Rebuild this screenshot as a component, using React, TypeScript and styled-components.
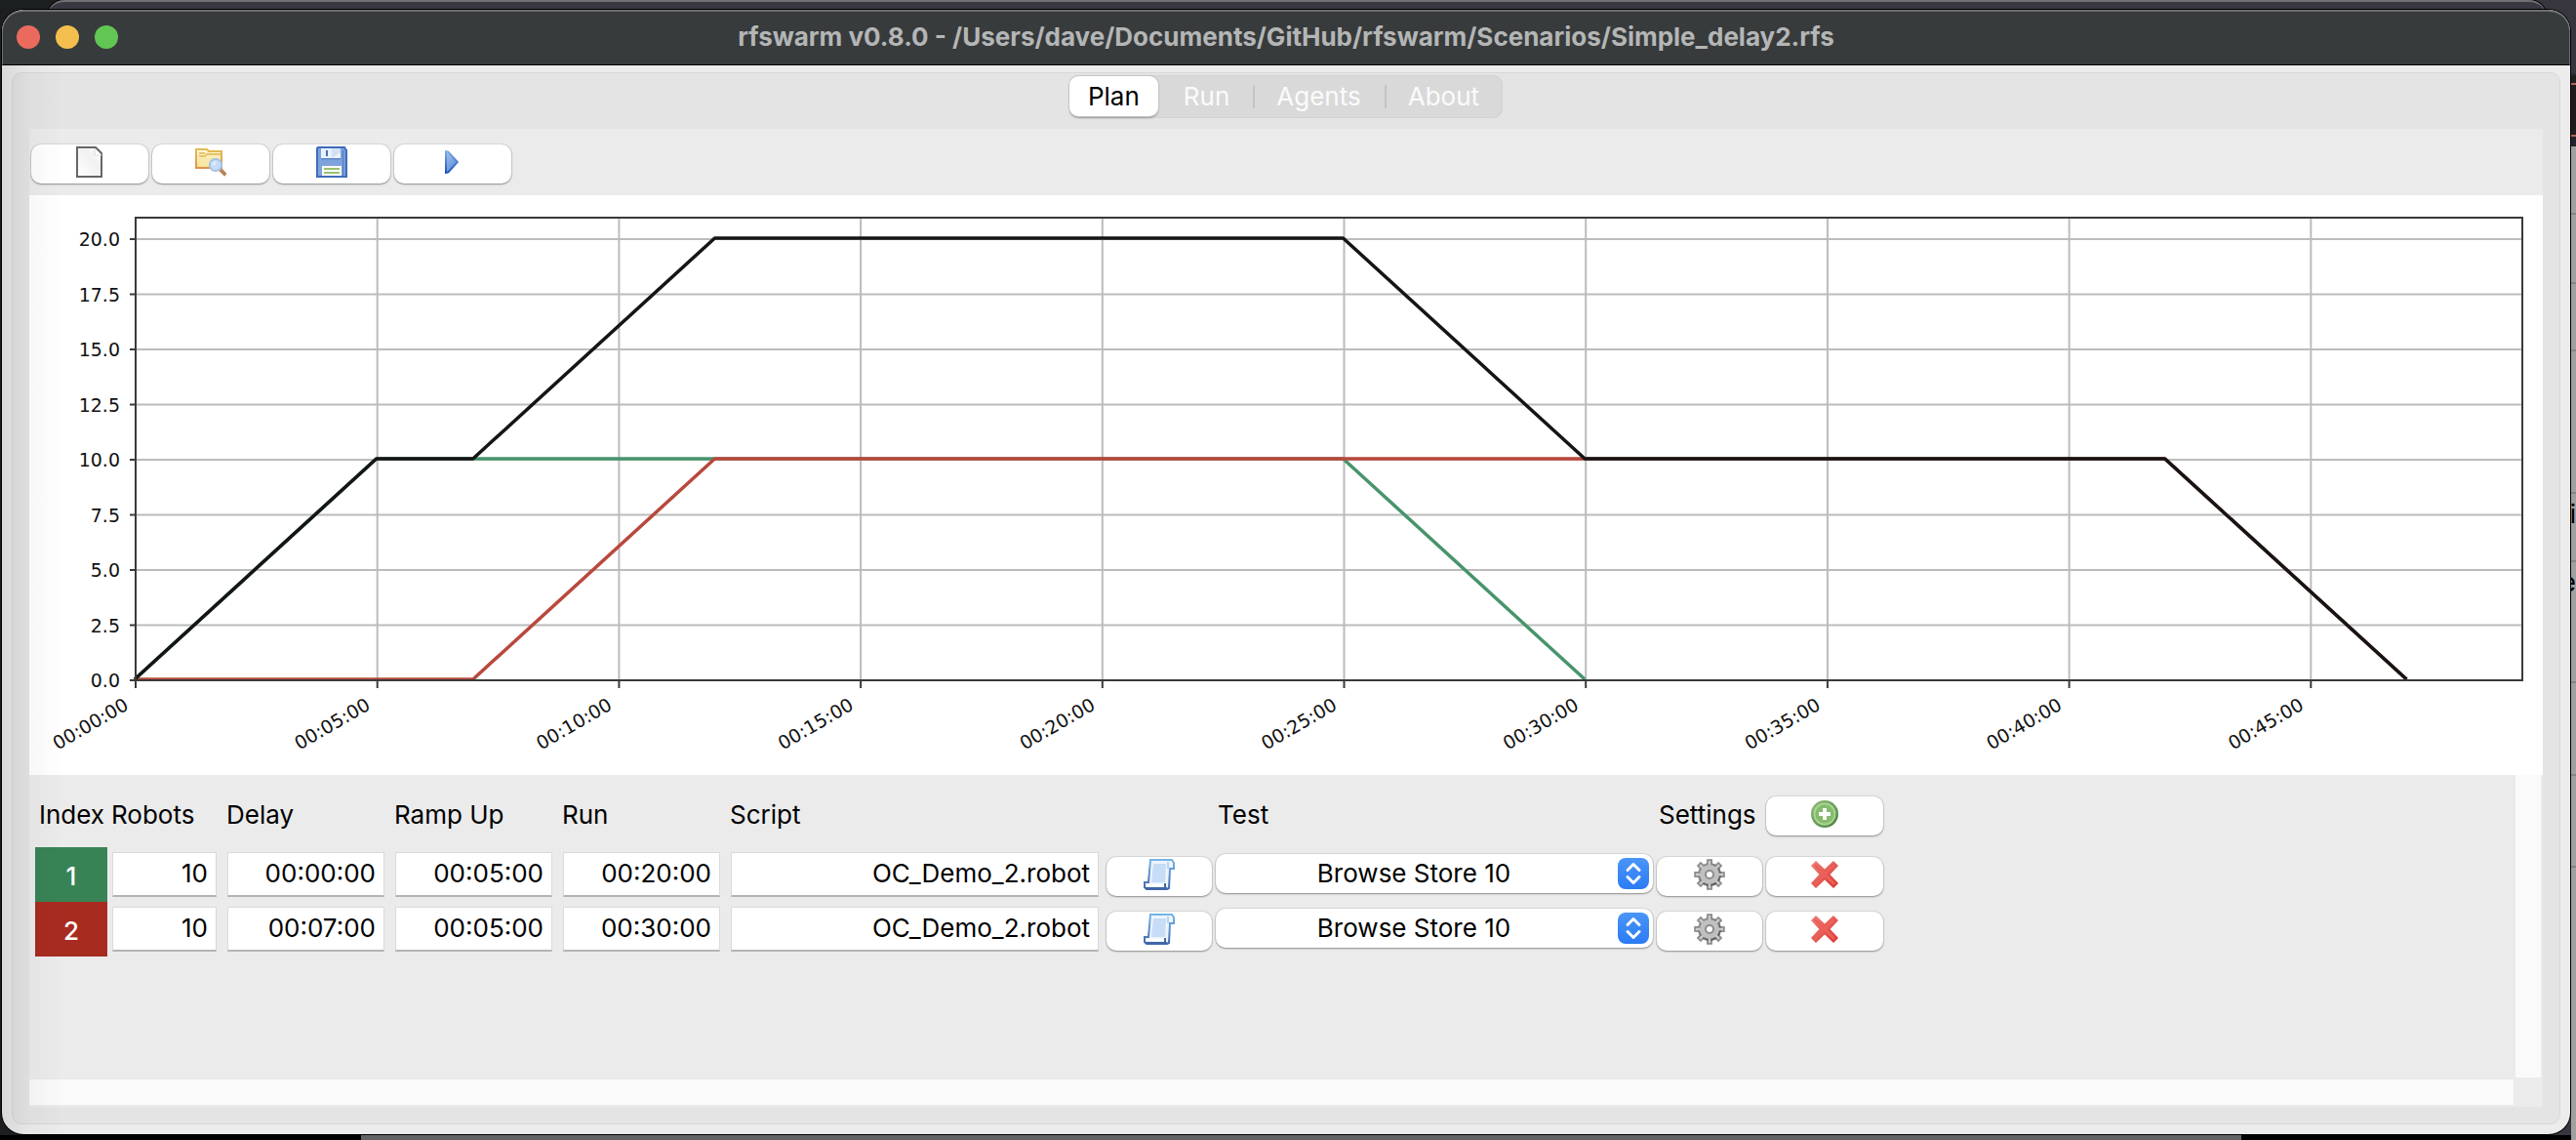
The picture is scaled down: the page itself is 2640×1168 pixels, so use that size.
import React from "react";
import styled, { createGlobalStyle, css } from "styled-components";

const UI_FONT = 'Inter, "Liberation Sans", Arial, sans-serif';

const GlobalStyle = createGlobalStyle`
  *, *::before, *::after { box-sizing: border-box; }
  body { margin: 0; background: #050507; font-family: ${UI_FONT}; }
  button, input, select { font: inherit; color: inherit; margin: 0; }
`;

/* ---------- desktop behind the window ---------- */

const Desktop = styled.div`
  position: relative;
  display: flex;
  min-height: 100vh;
  padding: 10px 6px 6px 2px;
  overflow: hidden;
  background:
    linear-gradient(to right, #000 0 14%, #636363 14% 87%, #000 87%) bottom / 100% 5px no-repeat,
    linear-gradient(to right, #1c1f20 0 50%, #37363f 50%);
`;

const RearWindow = styled.div`
  position: absolute;
  top: 0;
  left: 48px;
  right: 30px;
  height: 40px;
  border-top: 2px solid #717176;
  border-radius: 18px;
  background: #393842;
  box-shadow: 0 0 0 1px #000;
`;

const EdgeStrip = styled.div`
  position: absolute;
  top: 76px;
  right: 0;
  bottom: 0;
  width: 5px;
  overflow: hidden;
  border-top: 2px solid #24242c;
  background: linear-gradient(#221e1e 0 7px, #b2645b 7px 9px, #201c1c 9px 60px, #b2645b 60px 62px, #23232d 62px 72px, #a0a09f 72px);
`;

const EdgeText = styled.span<{ $top: number }>`
  position: absolute;
  right: 0;
  top: ${(p) => p.$top}px;
  font-size: 26px;
  line-height: 30px;
  color: #000;
`;

const EdgeRule = styled.span<{ $top: number }>`
  position: absolute;
  left: 0;
  right: 0;
  top: ${(p) => p.$top}px;
  height: 2px;
  background: #858585;
`;

/* ---------- window ---------- */

const Window = styled.main`
  position: relative;
  display: flex;
  flex: 1;
  flex-direction: column;
  min-width: 0;
  overflow: hidden;
  border-radius: 22px;
  background: #ececec;
  box-shadow: 0 0 0 1px #000;
`;

const TitleBar = styled.header`
  display: grid;
  grid-template-columns: 1fr auto 1fr;
  align-items: center;
  height: 57px;
  padding: 0 14px 2px;
  border: 1px solid #6b6e6f;
  border-top-width: 2px;
  border-bottom: 1px solid #000;
  border-radius: 22px 22px 0 0;
  background: #383b3c;
`;

const Lights = styled.div`
  display: flex;
  gap: 16px;
`;

const Light = styled.button<{ $color: string }>`
  width: 24px;
  height: 24px;
  padding: 0;
  border: 0;
  border-radius: 50%;
  background: ${(p) => p.$color};
`;

const Title = styled.h1`
  margin: 0;
  font-size: 26px;
  line-height: 32px;
  font-weight: 700;
  color: #b4b6b6;
  white-space: nowrap;
`;

const Body = styled.div`
  position: relative;
  display: flex;
  flex: 1;
  flex-direction: column;
  padding: 7px 10px 10px;

  &::after {
    content: "";
    position: absolute;
    inset: 0 auto 0 0;
    width: 64px;
    background: linear-gradient(to right, rgba(0, 0, 0, 0.08), rgba(0, 0, 0, 0.03) 40%, transparent);
    pointer-events: none;
  }
`;

const Notebook = styled.div`
  display: flex;
  flex: 1;
  flex-direction: column;
  padding: 2px 17px 17px;
  border: 1px solid #d8d8d8;
  border-radius: 10px;
  background: #e4e4e4;
`;

const TabList = styled.div`
  display: flex;
  align-self: center;
  height: 44px;
  margin-bottom: 11px;
  border-radius: 10px;
  background: #d9d9d9;
  box-shadow: inset 0 0 0 1px #d2d2d2;
`;

const Tab = styled.button<{ $selected?: boolean; $divided?: boolean }>`
  position: relative;
  padding: 0 24px;
  border: 0;
  font-size: 26px;
  line-height: 32px;
  background: transparent;
  color: #fbfbfb;

  ${(p) =>
    p.$selected &&
    css`
      margin: 1px 2px 2px 0;
      padding: 0 19px;
      border-radius: 9px;
      background: #fff;
      color: #000;
      box-shadow: 0 0 0 1px #c4c4c4, 0 2px 2px rgba(0, 0, 0, 0.3);
    `}

  ${(p) =>
    p.$divided &&
    css`
      &::before {
        content: "";
        position: absolute;
        left: 0;
        top: 10px;
        bottom: 10px;
        width: 2px;
        background: #c4c4c4;
      }
    `}
`;

const Page = styled.section`
  display: flex;
  flex: 1;
  flex-direction: column;
  background: #ebebeb;
`;

const Toolbar = styled.div`
  display: flex;
  gap: 4px;
  padding: 16px 2px 12px;
`;

const PushButton = styled.button<{ $width: number }>`
  display: flex;
  align-items: center;
  justify-content: center;
  width: ${(p) => p.$width}px;
  height: 40px;
  padding: 0 0 4px;
  border: 0;
  border-radius: 10px;
  background: #fff;
  box-shadow: 0 0 0 1px rgba(0, 0, 0, 0.07), 0 1px 2px rgba(0, 0, 0, 0.35);

  svg { width: 32px; height: 32px; }
`;

const ChartPane = styled.div`
  background: #fff;

  svg { display: block; width: 100%; height: auto; }
`;

/* ---------- scenario table ---------- */

const Scroller = styled.div`
  display: grid;
  flex: 1;
  grid-template-columns: 1fr 26px;
  grid-template-rows: 1fr 26px;
  gap: 2px;
  padding: 0 2px 2px 0;
`;

const Track = styled.div`
  background: #fafafa;
`;

const Viewport = styled.div`
  padding-left: 6px;
`;

const Table = styled.table`
  table-layout: fixed;
  width: 1896px;
  border-collapse: collapse;
  font-size: 26px;
  line-height: 32px;
  color: #000;
`;

const Col = styled.col<{ $width: number }>`
  width: ${(p) => p.$width}px;
`;

const HeadCell = styled.th`
  height: 74px;
  padding: 8px 0 0 4px;
  font-weight: 400;
  text-align: left;
  white-space: nowrap;
`;

const HeadButtonCell = styled.td`
  padding: 10px 2px 0;
`;

const IndexCell = styled.th<{ $color: string }>`
  height: 56px;
  padding: 4px 0 0;
  font-weight: 500;
  text-align: center;
  color: #fff;
  background: ${(p) => p.$color};
`;

const FieldCell = styled.td`
  padding: 0 6px 0 5px;
`;

const ButtonCell = styled.td`
  padding: 4px 2px 0;
`;

const SelectCell = styled.td`
  padding: 0 2px 2px;
`;

const Entry = styled.input`
  display: block;
  width: 100%;
  height: 46px;
  padding: 0 8px 2px;
  border: 1px solid #dadada;
  border-bottom: 2px solid #b4b4b4;
  border-radius: 0;
  background: #fff;
  text-align: right;
  outline: 0;
`;

const SelectBox = styled.div`
  position: relative;
`;

const Select = styled.select`
  display: block;
  appearance: none;
  width: 100%;
  height: 40px;
  padding: 0 42px 0 0;
  border: 0;
  border-radius: 10px;
  background: #fff;
  text-align: center;
  text-align-last: center;
  box-shadow: 0 0 0 1px rgba(0, 0, 0, 0.07), 0 1px 2px rgba(0, 0, 0, 0.35);
`;

const Stepper = styled.span`
  position: absolute;
  top: 4px;
  right: 4px;
  width: 32px;
  height: 32px;
  border-radius: 8px;
  background: linear-gradient(#4a95f8, #2b7bf5);
  pointer-events: none;

  svg { display: block; }
`;

/* ---------- icons, drawn on a 16 unit grid ---------- */

const NewIcon = () => (
  <svg viewBox="0 0 16 16" aria-hidden="true">
    <defs>
      <linearGradient id="paper" x1="0" y1="1" x2="1" y2="0">
        <stop offset="0" stopColor="#fff" />
        <stop offset="0.6" stopColor="#f1f1f1" />
        <stop offset="1" stopColor="#fff" />
      </linearGradient>
    </defs>
    <path d="M1.500.5h9.500l3 3v12H1.500z" fill="url(#paper)" stroke="#666" />
    <path d="M10.500 1v3.500H14" fill="#fff" stroke="#ddd" strokeWidth=".6" />
    <path d="M11 .5l3 3" stroke="#777" />
  </svg>
);

const OpenIcon = () => (
  <svg viewBox="0 0 16 16" aria-hidden="true">
    <defs>
      <linearGradient id="folder" x1="0" y1="0" x2="0" y2="1">
        <stop offset="0" stopColor="#fdf6da" />
        <stop offset="1" stopColor="#f6e08c" />
      </linearGradient>
      <linearGradient id="folderEdge" x1="0" y1="0" x2="0" y2="1">
        <stop offset="0" stopColor="#e3bd55" />
        <stop offset="1" stopColor="#dc9550" />
      </linearGradient>
    </defs>
    <path d="M.5 1.500h5.500l1 1h6.500v8.500H.5z" fill="url(#folder)" stroke="url(#folderEdge)" />
    <path d="M2 5h3l1-1h7M2 3.500h3" fill="none" stroke="#e8c468" strokeWidth=".9" />
    <path d="M2 6h10v4H2z" fill="#f8e8a6" opacity=".7" />
    <path d="M12.700 11.700l3 3" stroke="#b98456" strokeWidth="1.900" />
    <circle cx="10.500" cy="9.500" r="3.100" fill="#c5dcf6" stroke="#a3c0e6" strokeWidth=".9" />
    <circle cx="9.800" cy="8.800" r="1.100" fill="#dceafa" />
  </svg>
);

const SaveIcon = () => (
  <svg viewBox="0 0 16 16" aria-hidden="true">
    <path d="M.5 1L1 .5h13.500l1 1.500v13.500H.5z" fill="#7ea2dc" stroke="#3f6cba" />
    <path d="M2.500 1h10v5h-10z" fill="#eaf1fb" />
    <path d="M8 1h4.500v2L8 6z" fill="#d3e0f4" />
    <path d="M5 2h1v3H5z" fill="#4773bf" />
    <path d="M2.500 6h10v.8h-10z" fill="#5f88cc" />
    <path d="M13.800 2v13" stroke="#5a84ca" strokeWidth=".8" />
    <path d="M3 10h10v5H3z" fill="#fbfdf8" />
    <path d="M4 11h8v1H4zM4 13h8v1H4z" fill="#98c172" />
  </svg>
);

const PlayIcon = () => (
  <svg viewBox="0 0 16 16" aria-hidden="true">
    <defs>
      <linearGradient id="play" x1="0" y1="0" x2=".6" y2="1">
        <stop offset="0" stopColor="#a5c4ee" />
        <stop offset="1" stopColor="#5e8dd9" />
      </linearGradient>
      <linearGradient id="playEdge" x1="0" y1="0" x2="0" y2="1">
        <stop offset="0" stopColor="#82a9e4" />
        <stop offset="1" stopColor="#1f52c0" />
      </linearGradient>
    </defs>
    <path d="M4.500 2.600v10.900l1.200-.3 4.700-5.200-4.700-5.200z" fill="url(#play)" stroke="url(#playEdge)" />
  </svg>
);

const ScriptIcon = () => (
  <svg viewBox="0 0 16 16" aria-hidden="true">
    <defs>
      <linearGradient id="scrollEdge" x1="0" y1="0" x2="0" y2="1">
        <stop offset="0" stopColor="#74b5e6" />
        <stop offset="1" stopColor="#4269ac" />
      </linearGradient>
    </defs>
    <path d="M3.500.5h11l1 1.500v3h-2l-.5 10-1 .5h-10.500l-1-1v-2.500h2z" fill="#eef4fd" stroke="url(#scrollEdge)" />
    <path d="M5 2.500h6.500L11 12H4z" fill="#c6dcf7" />
    <path d="M12.500 1.500v3.500" stroke="#a5cdf0" strokeWidth=".8" />
    <path d="M1.500 13.500h9" stroke="#fff" />
    <path d="M1 15h11M11 12.500v2" stroke="#3f67a8" strokeWidth="1" />
  </svg>
);

const teeth = [0, 45, 90, 135, 180, 225, 270, 315];

const GearIcon = () => (
  <svg viewBox="0 0 16 16" aria-hidden="true">
    <defs>
      <linearGradient id="gear" gradientUnits="userSpaceOnUse" x1="2" y1="1" x2="14" y2="15">
        <stop offset="0" stopColor="#a0a0a0" />
        <stop offset="1" stopColor="#4c4c4c" />
      </linearGradient>
    </defs>
    {teeth.map((a) => (
      <path key={a} d="M6.500 4V.1h3V4z" fill="url(#gear)" transform={`rotate(${a} 8 8)`} />
    ))}
    <circle cx="8" cy="8" r="6" fill="url(#gear)" />
    {teeth.map((a) => (
      <path key={a} d="M7.400 4V1h1.200V4z" fill="#ccc" transform={`rotate(${a} 8 8)`} />
    ))}
    <circle cx="8" cy="8" r="5" fill="#c0c0c0" />
    <circle cx="8" cy="8" r="2" fill="#fff" stroke="#8c8c8c" />
  </svg>
);

const DeleteIcon = () => (
  <svg viewBox="0 0 16 16" aria-hidden="true">
    <defs>
      <linearGradient id="cross" x1="0" y1="0" x2="1" y2="1">
        <stop offset="0" stopColor="#f0827c" />
        <stop offset="1" stopColor="#d8342b" />
      </linearGradient>
    </defs>
    <path
      d="M1 3.500L3.500 1 8 5.300 12.500 1 15 3.500 10.800 8 15 12.500 12.500 15 8 10.700 3.500 15 1 12.500 5.200 8z"
      fill="url(#cross)"
    />
    <path d="M3 3l10 10M13 3L3 13" stroke="#ec605a" strokeWidth="1.300" />
  </svg>
);

const AddIcon = () => (
  <svg viewBox="0 0 16 16" aria-hidden="true">
    <defs>
      <linearGradient id="add" x1="0" y1="0" x2="1" y2="1">
        <stop offset="0" stopColor="#8fbf78" />
        <stop offset="1" stopColor="#46803a" />
      </linearGradient>
    </defs>
    <circle cx="8" cy="8" r="7" fill="url(#add)" />
    <circle cx="8" cy="8" r="5.300" fill="#84bc6b" stroke="#acd497" strokeWidth=".9" />
    <path d="M7 5h2v2h2v2H9v2H7V9H5V7h2z" fill="#fff" />
  </svg>
);

/* ---------- plan chart ---------- */

const PLOT = { left: 109, right: 2555, top: 23, bottom: 497 };
const MINUTE = 49.54;
const ROBOT = 22.6;

const px = (minute: number) => PLOT.left + minute * MINUTE;
const py = (robots: number) => PLOT.bottom - robots * ROBOT;
const line = (points: number[][]) => points.map(([m, r]) => `${px(m) - 1},${py(r) - 1}`).join(" ");

const yTicks = [0, 2.5, 5, 7.5, 10, 12.5, 15, 17.5, 20];
const xTicks = [0, 5, 10, 15, 20, 25, 30, 35, 40, 45];

const series = [
  { color: "#48946c", points: [[0, 0], [5, 10], [25, 10], [30, 0]] },
  { color: "#b9483c", points: [[0, 0], [7, 0], [12, 10], [42, 10], [47, 0]] },
  { color: "#151515", points: [[0, 0], [5, 10], [7, 10], [12, 20], [25, 20], [30, 10], [42, 10], [47, 0]] },
];

const AxisLabel = styled.text`
  font-family: "DejaVu Sans", sans-serif;
  font-size: 19px;
  fill: #111;
  text-anchor: end;
`;

const PlanChart = () => (
  <svg viewBox="0 0 2576 594" role="img" aria-label="Planned robots over time">
    <g stroke="#bcbcbc" strokeWidth="2">
      {yTicks.map((v) => (
        <line key={v} x1={PLOT.left} x2={PLOT.right} y1={py(v)} y2={py(v)} />
      ))}
      {xTicks.map((m) => (
        <line key={m} x1={px(m)} x2={px(m)} y1={PLOT.top} y2={PLOT.bottom} />
      ))}
    </g>
    <g fill="none" strokeWidth="3.5" strokeLinejoin="round">
      {series.map((s) => (
        <polyline key={s.color} points={line(s.points)} stroke={s.color} />
      ))}
    </g>
    <g stroke="#3a3a3a" strokeWidth="2" fill="none">
      <rect x={PLOT.left} y={PLOT.top} width={PLOT.right - PLOT.left} height={PLOT.bottom - PLOT.top} />
      {yTicks.map((v) => (
        <line key={v} x1={PLOT.left - 6} x2={PLOT.left} y1={py(v)} y2={py(v)} />
      ))}
      {xTicks.map((m) => (
        <line key={m} x1={px(m)} x2={px(m)} y1={PLOT.bottom} y2={PLOT.bottom + 8} />
      ))}
    </g>
    {yTicks.map((v) => (
      <AxisLabel key={v} x={PLOT.left - 16} y={py(v) + 7}>
        {v.toFixed(1)}
      </AxisLabel>
    ))}
    {xTicks.map((m) => (
      <AxisLabel key={m} transform={`translate(${px(m) - 6} ${PLOT.bottom + 29}) rotate(-30)`}>
        {`00:${String(m).padStart(2, "0")}:00`}
      </AxisLabel>
    ))}
  </svg>
);

/* ---------- data ---------- */

const columns = [74, 118, 172, 172, 172, 388, 112, 452, 112, 124];

const rows = [
  { index: 1, color: "#388355", robots: "10", delay: "00:00:00", ramp: "00:05:00", run: "00:20:00" },
  { index: 2, color: "#a82b20", robots: "10", delay: "00:07:00", ramp: "00:05:00", run: "00:30:00" },
];

const tools = [
  { label: "New", icon: <NewIcon /> },
  { label: "Open", icon: <OpenIcon /> },
  { label: "Save", icon: <SaveIcon /> },
  { label: "Play", icon: <PlayIcon /> },
];

export default function App() {
  return (
    <>
      <GlobalStyle />
      <Desktop>
        <RearWindow />
        <EdgeStrip aria-hidden="true">
          {[140, 211, 280, 426, 496, 620, 715, 809].map((top) => (
            <EdgeRule key={top} $top={top} />
          ))}
          <EdgeText $top={434}>i</EdgeText>
          <EdgeText $top={504}>e</EdgeText>
        </EdgeStrip>
        <Window>
          <TitleBar>
            <Lights>
              <Light $color="#eb6a5e" aria-label="Close" />
              <Light $color="#f5bf4f" aria-label="Minimise" />
              <Light $color="#62c655" aria-label="Zoom" />
            </Lights>
            <Title>rfswarm v0.8.0 - /Users/dave/Documents/GitHub/rfswarm/Scenarios/Simple_delay2.rfs</Title>
          </TitleBar>
          <Body>
            <Notebook>
              <TabList role="tablist">
                <Tab role="tab" aria-selected="true" $selected>Plan</Tab>
                <Tab role="tab" aria-selected="false">Run</Tab>
                <Tab role="tab" aria-selected="false" $divided>Agents</Tab>
                <Tab role="tab" aria-selected="false" $divided>About</Tab>
              </TabList>
              <Page role="tabpanel">
                <Toolbar>
                  {tools.map((t) => (
                    <PushButton key={t.label} $width={120} aria-label={t.label}>
                      {t.icon}
                    </PushButton>
                  ))}
                </Toolbar>
                <ChartPane>
                  <PlanChart />
                </ChartPane>
                <Scroller>
                  <Viewport>
                    <Table>
                      <colgroup>
                        {columns.map((w, i) => (
                          <Col key={i} $width={w} />
                        ))}
                      </colgroup>
                      <thead>
                        <tr>
                          <HeadCell scope="col">Index</HeadCell>
                          <HeadCell scope="col">Robots</HeadCell>
                          <HeadCell scope="col">Delay</HeadCell>
                          <HeadCell scope="col">Ramp Up</HeadCell>
                          <HeadCell scope="col">Run</HeadCell>
                          <HeadCell scope="col" colSpan={2}>Script</HeadCell>
                          <HeadCell scope="col">Test</HeadCell>
                          <HeadCell scope="col">Settings</HeadCell>
                          <HeadButtonCell>
                            <PushButton $width={120} aria-label="Add row">
                              <AddIcon />
                            </PushButton>
                          </HeadButtonCell>
                        </tr>
                      </thead>
                      <tbody>
                        {rows.map((r) => (
                          <tr key={r.index}>
                            <IndexCell scope="row" $color={r.color}>{r.index}</IndexCell>
                            <FieldCell><Entry aria-label="Robots" defaultValue={r.robots} /></FieldCell>
                            <FieldCell><Entry aria-label="Delay" defaultValue={r.delay} /></FieldCell>
                            <FieldCell><Entry aria-label="Ramp Up" defaultValue={r.ramp} /></FieldCell>
                            <FieldCell><Entry aria-label="Run" defaultValue={r.run} /></FieldCell>
                            <FieldCell><Entry aria-label="Script" defaultValue="OC_Demo_2.robot" /></FieldCell>
                            <ButtonCell>
                              <PushButton $width={108} aria-label="Choose script"><ScriptIcon /></PushButton>
                            </ButtonCell>
                            <SelectCell>
                              <SelectBox>
                                <Select aria-label="Test" defaultValue="Browse Store 10">
                                  <option>Browse Store 10</option>
                                </Select>
                                <Stepper>
                                  <svg viewBox="0 0 32 32" fill="none" stroke="#fff" strokeWidth="3" strokeLinecap="round" strokeLinejoin="round">
                                    <path d="M10 12.500l6-6 6 6M10 19.500l6 6 6-6" />
                                  </svg>
                                </Stepper>
                              </SelectBox>
                            </SelectCell>
                            <ButtonCell>
                              <PushButton $width={108} aria-label="Row settings"><GearIcon /></PushButton>
                            </ButtonCell>
                            <ButtonCell>
                              <PushButton $width={120} aria-label="Remove row"><DeleteIcon /></PushButton>
                            </ButtonCell>
                          </tr>
                        ))}
                      </tbody>
                    </Table>
                  </Viewport>
                  <Track />
                  <Track />
                </Scroller>
              </Page>
            </Notebook>
          </Body>
        </Window>
      </Desktop>
    </>
  );
}
